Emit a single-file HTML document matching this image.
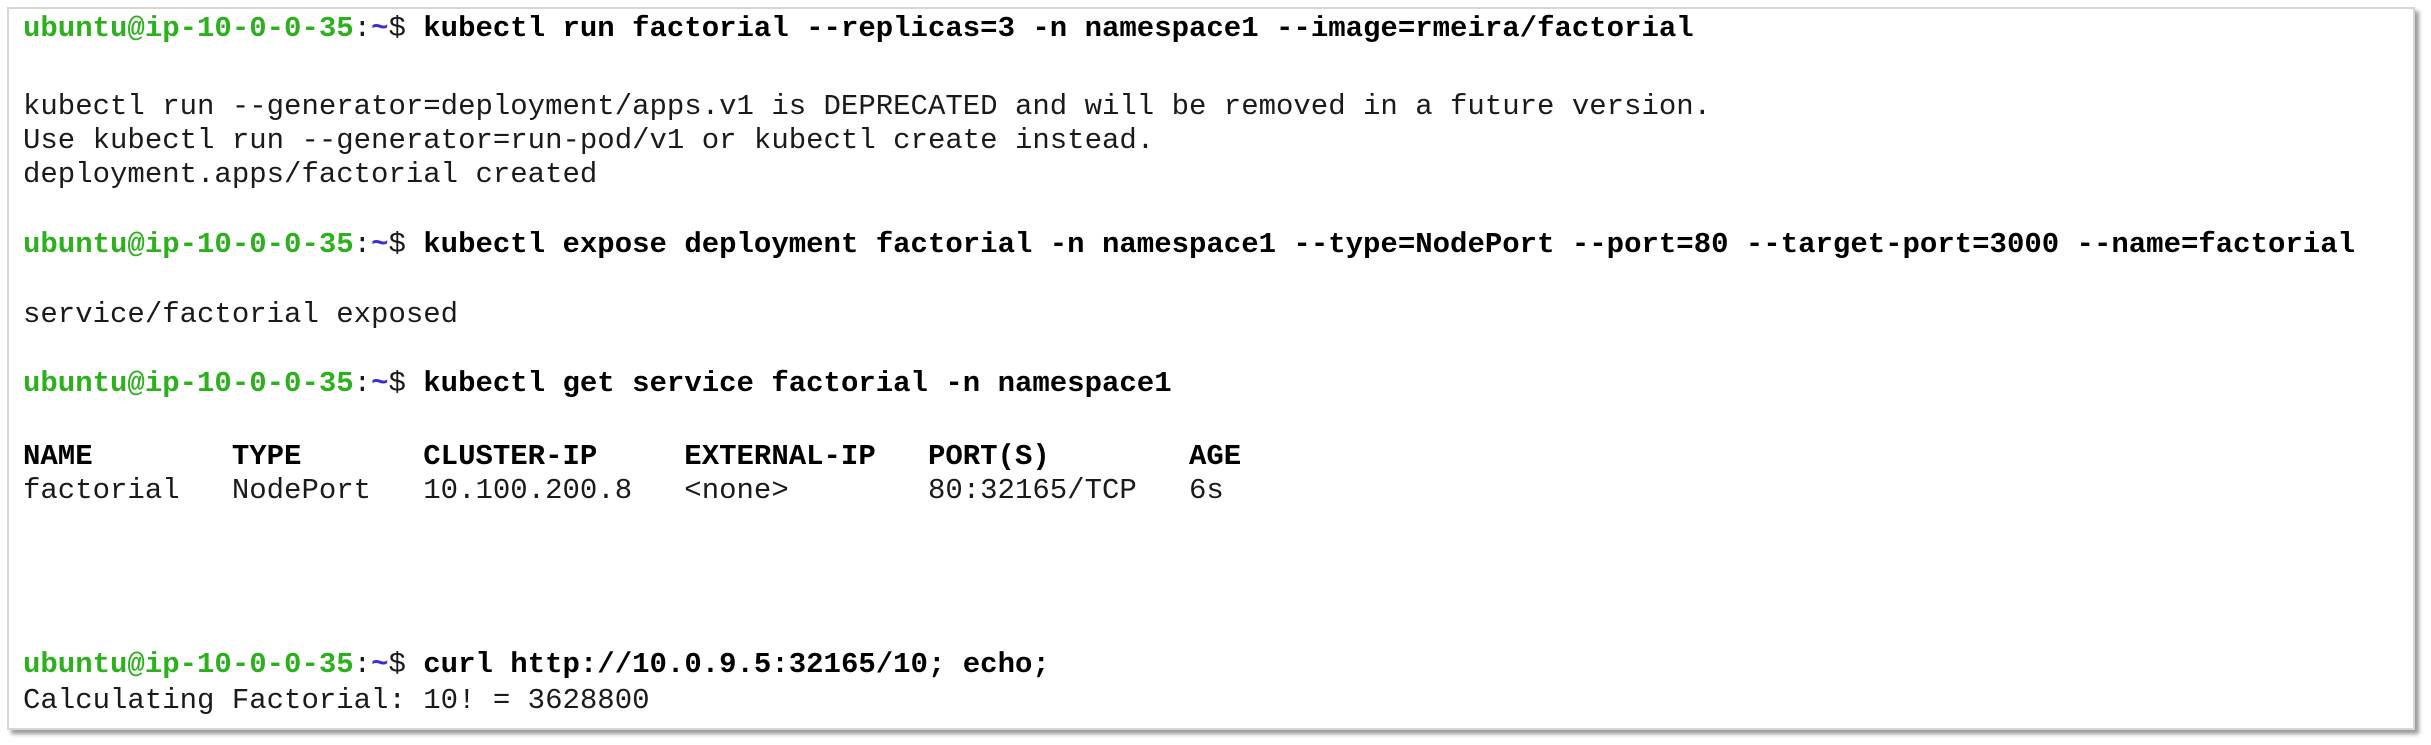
<!DOCTYPE html>
<html><head><meta charset="utf-8"><style>
html,body{margin:0;padding:0;background:#fff;width:2431px;height:745px;overflow:hidden}
.box{position:absolute;left:7px;top:7px;width:2404px;height:719px;border:2px solid #d6d6d6;box-shadow:4px 4px 4px #9a9a9a;background:#fff}
.l{position:absolute;left:23px;margin:0;font-family:"Liberation Mono",monospace;font-size:29px;line-height:34px;color:#1a1a1a;white-space:pre}
.g{color:#2db01e;font-weight:bold}
.t{color:#3a2fd0;font-weight:bold}
b{font-weight:bold;color:#000}
</style></head><body>
<div class="box"></div>
<pre class="l" style="top:12px"><span class="g">ubuntu@ip-10-0-0-35</span>:<span class="t">~</span>$ <b>kubectl run factorial --replicas=3 -n namespace1 --image=rmeira/factorial</b></pre>
<pre class="l" style="top:90px">kubectl run --generator=deployment/apps.v1 is DEPRECATED and will be removed in a future version.</pre>
<pre class="l" style="top:124px">Use kubectl run --generator=run-pod/v1 or kubectl create instead.</pre>
<pre class="l" style="top:158px">deployment.apps/factorial created</pre>
<pre class="l" style="top:228px"><span class="g">ubuntu@ip-10-0-0-35</span>:<span class="t">~</span>$ <b>kubectl expose deployment factorial -n namespace1 --type=NodePort --port=80 --target-port=3000 --name=factorial</b></pre>
<pre class="l" style="top:298px">service/factorial exposed</pre>
<pre class="l" style="top:367px"><span class="g">ubuntu@ip-10-0-0-35</span>:<span class="t">~</span>$ <b>kubectl get service factorial -n namespace1</b></pre>
<pre class="l" style="top:440px"><b>NAME        TYPE       CLUSTER-IP     EXTERNAL-IP   PORT(S)        AGE</b></pre>
<pre class="l" style="top:474px">factorial   NodePort   10.100.200.8   &lt;none&gt;        80:32165/TCP   6s</pre>
<pre class="l" style="top:648px"><span class="g">ubuntu@ip-10-0-0-35</span>:<span class="t">~</span>$ <b>curl http://10.0.9.5:32165/10; echo;</b></pre>
<pre class="l" style="top:684px">Calculating Factorial: 10! = 3628800</pre>
</body></html>
